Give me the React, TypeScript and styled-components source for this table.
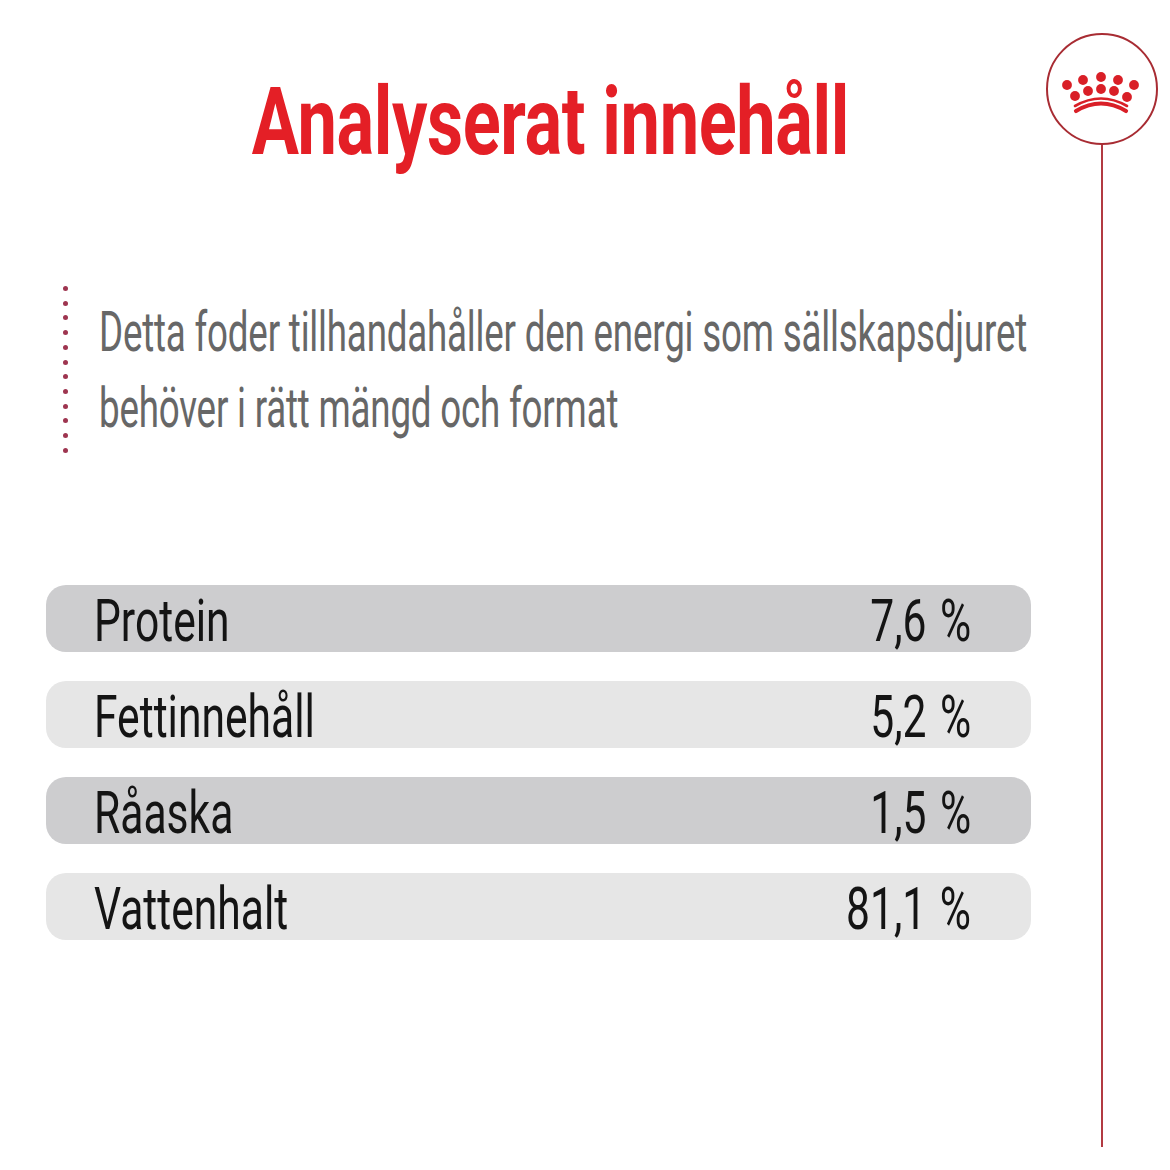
import * as React from "react";
import styled, { createGlobalStyle } from "styled-components";

const GlobalStyle = createGlobalStyle`
  html, body {
    margin: 0;
    padding: 0;
    background: #ffffff;
  }
  body {
    font-family: "Roboto", "Liberation Sans", sans-serif;
  }
`;

const Page = styled.div`
  display: flex;
  width: 1170px;
  height: 1170px;
  overflow: hidden;
  background: #ffffff;
`;

const Main = styled.div`
  display: flex;
  flex-direction: column;
  width: 985px;
  padding-left: 46px;
`;

const Title = styled.h1`
  margin: 72px 0 0;
  height: 100px;
  font-family: "Roboto", sans-serif;
  font-weight: 700;
  font-size: 94px;
  line-height: 100px;
  color: #e41f26;
  text-align: center;
  white-space: nowrap;
  letter-spacing: -0.5px;
  transform: translateX(12px) scaleX(0.748);
  transform-origin: 492px 0;
`;

const Quote = styled.div`
  display: flex;
  align-items: flex-start;
  gap: 31px;
  margin-top: 106px;
  height: 176px;
`;

const Dots = styled.div`
  display: flex;
  flex: none;
  flex-direction: column;
  justify-content: space-between;
  width: 5px;
  height: 167px;
  margin-left: 17px;
  margin-top: 8px;
`;

const Dot = styled.span`
  display: block;
  width: 5px;
  height: 5px;
  border-radius: 50%;
  background: #9e3550;
`;

const QuoteText = styled.p`
  flex: none;
  margin: 16px 0 0;
  width: 1400px;
  font-size: 55px;
  line-height: 76px;
  color: #676767;
  letter-spacing: -0.3px;
  transform: scaleX(0.668);
  transform-origin: 0 0;
`;

const Table = styled.div`
  display: flex;
  flex-direction: column;
  gap: 29px;
  margin-top: 131px;
`;

const Row = styled.div<{ $dark: boolean }>`
  display: flex;
  align-items: center;
  justify-content: space-between;
  height: 67px;
  padding: 0 60px 0 48px;
  border-radius: 20px;
  background: ${({ $dark }) => ($dark ? "#cdcdcf" : "#e6e6e6")};
  box-sizing: border-box;
`;

const Cell = styled.span<{ $right?: boolean }>`
  display: inline-block;
  font-size: 60px;
  line-height: 67px;
  color: #141414;
  white-space: nowrap;
  transform: translateY(2px) scaleX(0.71);
  transform-origin: ${({ $right }) => ($right ? "100% 50%" : "0 50%")};
`;

const Gap = styled.span`
  display: inline-block;
  width: 0.07em;
`;

const Rail = styled.div`
  display: flex;
  flex-direction: column;
  align-items: center;
  width: 112px;
  margin-left: 15px;
  padding: 33px 0 23px;
`;

const Badge = styled.svg`
  display: block;
  flex: none;
`;

const Stem = styled.div`
  flex: 1;
  width: 2px;
  background: #b23a42;
`;

const rows = [
  { label: "Protein", value: "7,6" },
  { label: "Fettinnehåll", value: "5,2" },
  { label: "Råaska", value: "1,5" },
  { label: "Vattenhalt", value: "81,1" },
];

const topDots = [
  [21, 52],
  [37, 47],
  [55, 44],
  [72, 47],
  [88, 52],
];

const bottomDots = [
  [29, 63],
  [42, 58],
  [55, 56],
  [68, 58],
  [81, 64],
];

const Crown = () => (
  <Badge width="112" height="112" viewBox="0 0 112 112">
    <circle cx="56" cy="56" r="55" fill="#ffffff" stroke="#a82c33" strokeWidth="2" />
    {[...topDots, ...bottomDots].map(([cx, cy], i) => (
      <circle key={i} cx={cx} cy={cy} r="4.9" fill="#d91f27" />
    ))}
    <path d="M29 73 Q55 58 81 73" fill="none" stroke="#d91f27" strokeWidth="2.6" strokeLinecap="round" />
    <path d="M30 78 Q55 63 80 78" fill="none" stroke="#d91f27" strokeWidth="4.2" strokeLinecap="round" />
  </Badge>
);

export default function App() {
  return (
    <Page>
      <GlobalStyle />
      <Main>
        <Title>Analyserat innehåll</Title>
        <Quote>
          <Dots>
            {Array.from({ length: 12 }).map((_, i) => (
              <Dot key={i} />
            ))}
          </Dots>
          <QuoteText>
            Detta foder tillhandahåller den energi som sällskapsdjuret
            <br />
            behöver i rätt mängd och format
          </QuoteText>
        </Quote>
        <Table>
          {rows.map((row, i) => (
            <Row key={row.label} $dark={i % 2 === 0}>
              <Cell>{row.label}</Cell>
              <Cell $right>
                {row.value} <Gap />%
              </Cell>
            </Row>
          ))}
        </Table>
      </Main>
      <Rail>
        <Crown />
        <Stem />
      </Rail>
    </Page>
  );
}
